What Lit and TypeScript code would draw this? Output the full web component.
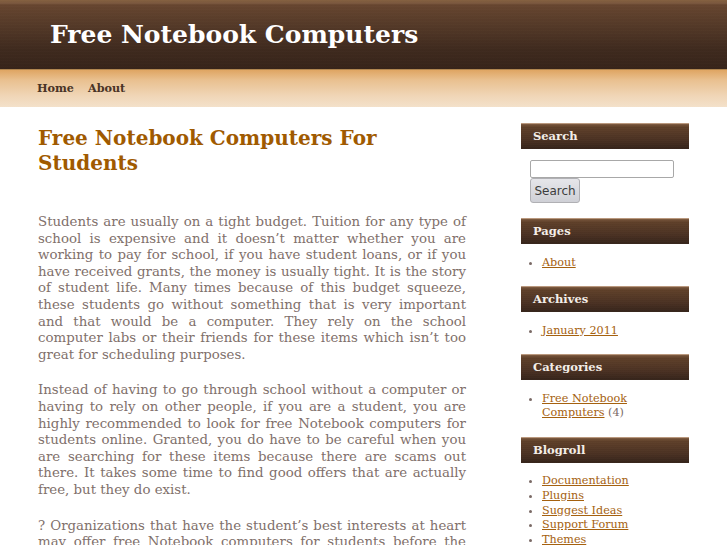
import { LitElement, html, css } from "lit";
import { customElement } from "lit/decorators.js";

const widgets = [
  { title: "Pages", items: [["About", ""]] },
  { title: "Archives", items: [["January 2011", ""]] },
  { title: "Categories", items: [["Free Notebook Computers", " (4)"]] },
  { title: "Blogroll", items: [["Documentation", ""], ["Plugins", ""], ["Suggest Ideas", ""], ["Support Forum", ""], ["Themes", ""]] },
];

@customElement("app-root")
export class AppRoot extends LitElement {
  static styles = css`
    :host { display: block; height: 545px; overflow: hidden; background: #fff; font-family: "DejaVu Serif", serif; color: #7a6a66; }
    .header {
      height: 69px; box-sizing: border-box; padding: 19px 0 0 50px;
      background:
        repeating-linear-gradient(180deg, rgba(255,255,255,.008) 0 1px, rgba(0,0,0,.012) 1px 3px),
        linear-gradient(180deg, #84603f 0, #7d5a40 3px, #674630 5px, #553a28 25px, #3f2a1e 50px, #37241a 69px);
    }
    .header h1 { margin: 0; font-size: 25px; line-height: 31px; font-weight: 700; color: #fff; }
    .nav {
      height: 38px; box-sizing: border-box; padding: 10px 0 0 37px; display: flex; gap: 14px;
      background: linear-gradient(180deg, #dfa562 0, #e9c08f 10px, #f0d6b7 26px, #f4e2cc 38px);
      border-top: 1px solid #b08650;
    }
    .nav a { font-size: 11.2px; line-height: 16px; font-weight: 700; color: #4a3426; }
    .page { display: flex; align-items: flex-start; padding: 19px 0 0 38px; }
    .main { width: 428px; flex: none; }
    .main h2 { margin: 0 0 38px; font-size: 20px; line-height: 25px; font-weight: 700; color: #a05a00; }
    .main p { margin: 0 0 19px; font-size: 13.33px; line-height: 16.6px; text-align: justify; color: #7f706b; }
    .side { width: 168px; margin: -3px 0 0 55px; flex: none; }
    .wt {
      height: 26px; box-sizing: border-box; padding-left: 12px; font-size: 11.5px; line-height: 24px; font-weight: 700; color: #f4eee8;
      background:
        repeating-linear-gradient(180deg, rgba(255,255,255,.012) 0 1px, rgba(0,0,0,.012) 1px 2px),
        linear-gradient(180deg, #7d5a40 0, #5f4029 3px, #4a3122 16px, #35231a 25px);
      border-top: 1px solid #b9987e;
    }
    .search { padding: 11px 0 15px 9px; display: flex; flex-direction: column; align-items: flex-start; }
    .search .box { width: 144px; height: 18px; box-sizing: border-box; border: 1px solid #a8a8a8; border-radius: 2px; background: #fff; }
    .search .btn {
      width: 50px; height: 25px; box-sizing: border-box; border: 1px solid #b0b0b4; border-radius: 3px;
      background: linear-gradient(180deg, #e6e6ea, #cfd0d6); font: 12px/24px "DejaVu Sans", sans-serif; color: #3c3c3c; text-align: center;
    }
    ul { margin: 0; padding: 11.7px 0 15.6px 21px; list-style: disc; color: #7a6a66; }
    li { font-size: 11.2px; line-height: 14.7px; }
    li a { color: #a5610f; text-decoration: underline; }
  `;

  render() {
    return html`
      <div class="header"><h1>Free Notebook Computers</h1></div>
      <div class="nav"><a>Home</a><a>About</a></div>
      <div class="page">
        <div class="main">
          <h2>Free Notebook Computers For Students</h2>
          <p>Students are usually on a tight budget. Tuition for any type of school is expensive and it doesn’t matter whether you are working to pay for school, if you have student loans, or if you have received grants, the money is usually tight. It is the story of student life. Many times because of this budget squeeze, these students go without something that is very important and that would be a computer. They rely on the school computer labs or their friends for these items which isn’t too great for scheduling purposes.</p>
          <p>Instead of having to go through school without a computer or having to rely on other people, if you are a student, you are highly recommended to look for free Notebook computers for students online. Granted, you do have to be careful when you are searching for these items because there are scams out there. It takes some time to find good offers that are actually free, but they do exist.</p>
          <p>? Organizations that have the student’s best interests at heart may offer free Notebook computers for students before the school year begins so that they are ready.</p>
        </div>
        <div class="side">
          <div class="wt">Search</div>
          <div class="search"><div class="box"></div><div class="btn">Search</div></div>
          ${widgets.map((w) => html`
            <div class="wt">${w.title}</div>
            <ul>${w.items.map(([t, c]) => html`<li><a>${t}</a>${c}</li>`)}</ul>
          `)}
        </div>
      </div>
    `;
  }
}
